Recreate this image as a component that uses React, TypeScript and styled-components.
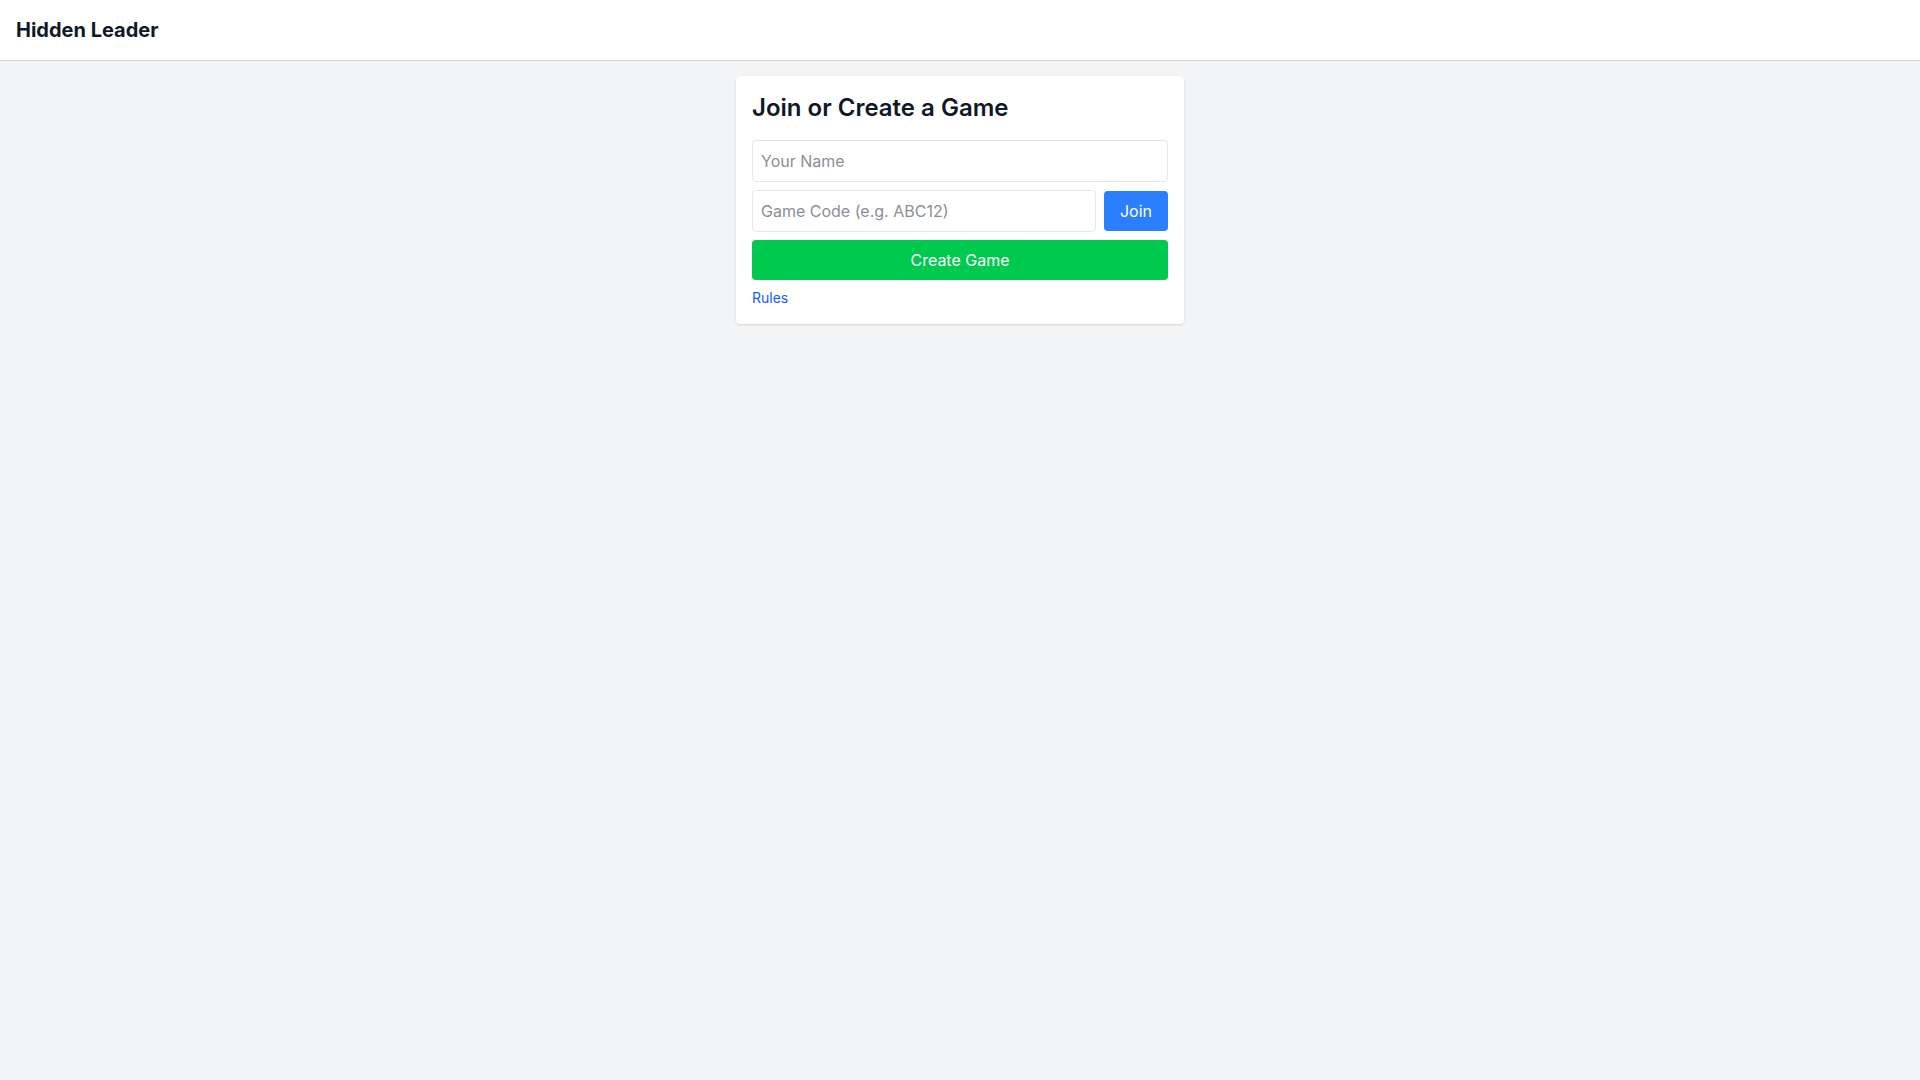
import React from "react";
import styled, { createGlobalStyle } from "styled-components";

const Global = createGlobalStyle`
  html, body { margin: 0; padding: 0; }
  body {
    background: #f3f4f6;
    font-family: Inter, "Noto Sans", "Liberation Sans", sans-serif;
    color: #101828;
    min-height: 100vh;
  }
  * { box-sizing: border-box; }
`;

const Page = styled.div`
  min-height: 100vh;
  background: #f3f4f6;
`;

const Header = styled.header`
  height: 61px;
  background: #ffffff;
  border-bottom: 1px solid #d1d5dc;
  display: flex;
  align-items: center;
  padding: 0 16px;
`;

const Brand = styled.h1`
  margin: 0;
  font-size: 20px;
  line-height: 28px;
  font-weight: 700;
  color: #101828;
`;

const Main = styled.main`
  display: flex;
  justify-content: center;
  padding-top: 15px;
`;

const Card = styled.section`
  width: 448px;
  background: #ffffff;
  border-radius: 4px;
  box-shadow: 0 1px 3px 0 rgba(0, 0, 0, 0.1), 0 1px 2px -1px rgba(0, 0, 0, 0.1);
  padding: 16px;
`;

const Title = styled.h2`
  margin: 0 0 16px;
  font-size: 24px;
  line-height: 32px;
  font-weight: 600;
  color: #101828;
`;

const Input = styled.input<{ $grow?: boolean }>`
  display: block;
  width: 100%;
  flex: ${(p) => (p.$grow ? "1 1 auto" : "none")};
  min-width: 0;
  height: 42px;
  padding: 8px;
  font-family: inherit;
  font-size: 16px;
  line-height: 24px;
  color: #101828;
  border: 1px solid #e5e7eb;
  border-radius: 4px;
  background: #fff;
  outline: none;
  &::placeholder { color: #8b8f98; }
`;

const Stack = styled.div`
  display: flex;
  flex-direction: column;
  gap: 8px;
`;

const Row = styled.div`
  display: flex;
  align-items: center;
  gap: 8px;
`;

const Button = styled.button<{ $tone: "blue" | "green"; $full?: boolean }>`
  flex: none;
  height: 40px;
  padding: 0 16px;
  border: none;
  border-radius: 4px;
  font-family: inherit;
  font-size: 16px;
  line-height: 24px;
  color: #ffffff;
  background: ${(p) => (p.$tone === "blue" ? "#2b7fff" : "#00c950")};
  width: ${(p) => (p.$full ? "100%" : "auto")};
  cursor: pointer;
`;

const RulesLink = styled.a`
  display: inline-block;
  margin-top: 8px;
  font-size: 14px;
  line-height: 20px;
  color: #155dfc;
  text-decoration: none;
`;

export default function App() {
  return (
    <Page>
      <Global />
      <Header>
        <Brand>Hidden Leader</Brand>
      </Header>
      <Main>
        <Card>
          <Title>Join or Create a Game</Title>
          <Stack>
            <Input placeholder="Your Name" />
            <Row>
              <Input $grow placeholder="Game Code (e.g. ABC12)" />
              <Button $tone="blue">Join</Button>
            </Row>
            <Button $tone="green" $full>
              Create Game
            </Button>
          </Stack>
          <RulesLink href="#">Rules</RulesLink>
        </Card>
      </Main>
    </Page>
  );
}
